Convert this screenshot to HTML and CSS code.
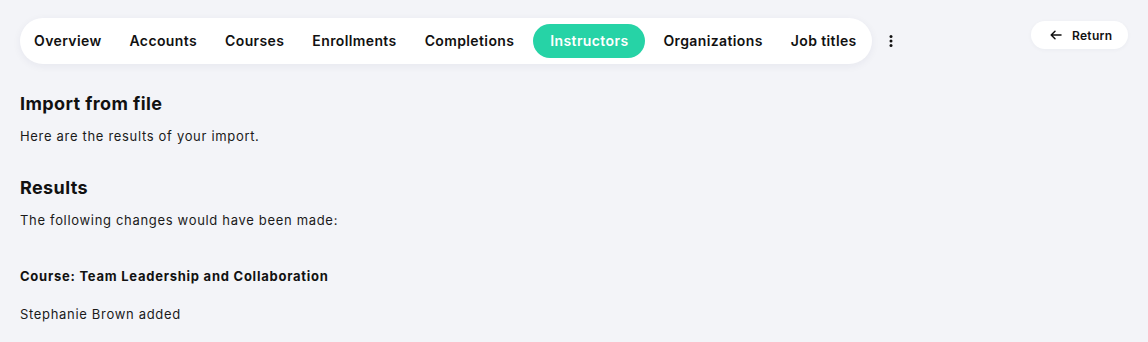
FILE: index.html
```html
<!DOCTYPE html>
<html lang="en">
<head>
<meta charset="utf-8">
<title>Import from file</title>
<link rel="stylesheet" href="styles.css">
</head>
<body>
<header class="topbar">
  <nav class="tabs">
    <a class="tab">Overview</a>
    <a class="tab">Accounts</a>
    <a class="tab">Courses</a>
    <a class="tab">Enrollments</a>
    <a class="tab">Completions</a>
    <a class="tab active">Instructors</a>
    <a class="tab">Organizations</a>
    <a class="tab">Job titles</a>
  </nav>
  <button class="more" aria-label="More">
    <svg width="4" height="12" viewBox="0 0 4 12"><circle cx="2" cy="1.5" r="1.5"/><circle cx="2" cy="6" r="1.5"/><circle cx="2" cy="10.5" r="1.5"/></svg>
  </button>
  <div class="spacer"></div>
  <button class="return">
    <svg width="12" height="10" viewBox="0 0 12 10" fill="none" stroke="#111" stroke-width="1.5" stroke-linecap="round" stroke-linejoin="round"><path d="M11 5H1.5M5 1.2L1.2 5 5 8.8"/></svg>
    <span>Return</span>
  </button>
</header>
<main class="content">
  <h2 class="title first">Import from file</h2>
  <p class="text">Here are the results of your import.</p>
  <h2 class="title">Results</h2>
  <p class="text">The following changes would have been made:</p>
  <h3 class="course">Course: Team Leadership and Collaboration</h3>
  <p class="text">Stephanie Brown added</p>
</main>
</body>
</html>
```
FILE: styles.css
```css
* { box-sizing: border-box; }
html, body { margin: 0; padding: 0; }
body {
  background: #f3f4f8;
  font-family: "Inter", "Open Sans", sans-serif;
  color: #111;
}
.topbar {
  display: flex;
  align-items: flex-start;
  padding: 18px 20px 0 20px;
}
.tabs {
  display: flex;
  align-items: center;
  height: 46px;
  background: #fff;
  border-radius: 23px;
  padding: 0 1px 0 0;
  box-shadow: 0 2px 8px rgba(30, 40, 80, 0.06);
}
.tab {
  font-size: 14px;
  font-weight: 600;
  letter-spacing: 0.38px;
  padding: 0 14px;
  height: 34px;
  line-height: 34px;
  border-radius: 17px;
  color: #111;
  white-space: nowrap;
}
.tab.active {
  background: #26d3a6;
  color: #fff;
  padding: 0 17px;
  margin: 0 4px 0 5px;
}
.more {
  border: 0;
  background: none;
  padding: 0;
  margin: 17px 0 0 17px;
  width: 4px;
  height: 12px;
  display: flex;
}
.more svg { fill: #111; }
.spacer { flex: 1; }
.return {
  margin-top: 3px;
  height: 28px;
  width: 97px;
  border: 0;
  border-radius: 14px;
  background: #fff;
  display: flex;
  align-items: center;
  gap: 10px;
  padding: 0 0 0 19px;
  font-family: inherit;
  font-size: 12px;
  font-weight: 600;
  letter-spacing: 0.3px;
  color: #111;
  box-shadow: 0 1px 4px rgba(30, 40, 80, 0.04);
}
.content {
  padding: 0 20px;
}
.title {
  font-size: 18px;
  font-weight: 700;
  letter-spacing: 0.4px;
  margin: 0;
  line-height: 26px;
}
.title.first { margin-top: 27px; }
.title:not(.first) { margin-top: 29px; }
.text {
  font-size: 13px;
  line-height: 20px;
  letter-spacing: 0.68px;
  margin: 9px 0 0 0;
  color: #1a1a1a;
}
.course {
  font-size: 13px;
  font-weight: 700;
  letter-spacing: 0.75px;
  line-height: 20px;
  margin: 36px 0 0 0;
}
.course + .text { margin-top: 18px; }
```
